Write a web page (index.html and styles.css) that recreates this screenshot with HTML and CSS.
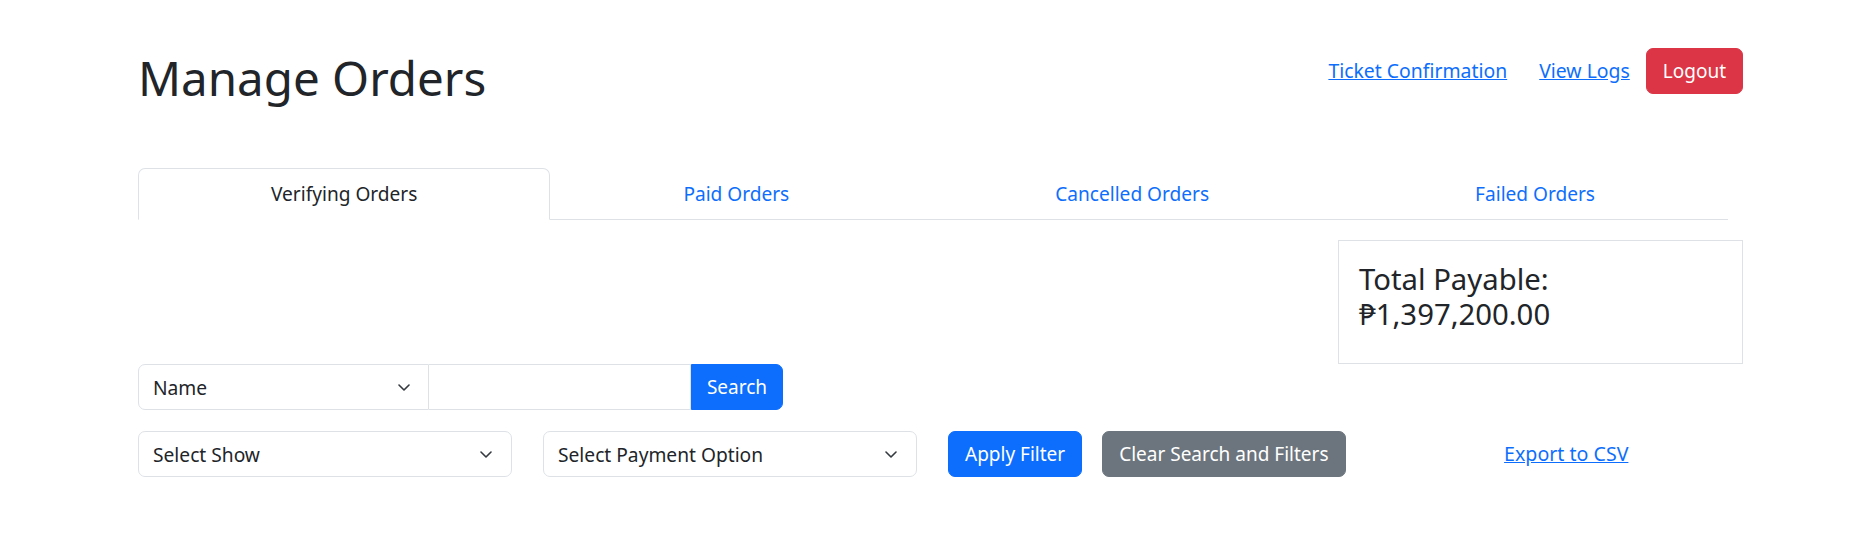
FILE: index.html
```html
<!DOCTYPE html>
<html lang="en">
<head>
<meta charset="utf-8">
<title>Manage Orders</title>
<link rel="stylesheet" href="styles.css">
</head>
<body>
<div class="page">
  <header class="top">
    <h1 class="title">Manage Orders</h1>
    <nav class="top-links">
      <a href="#" class="link link-ticket">Ticket Confirmation</a>
      <a href="#" class="link link-logs">View Logs</a>
      <button class="btn btn-red">Logout</button>
    </nav>
  </header>

  <ul class="tabs">
    <li class="tab active">Verifying Orders</li>
    <li class="tab">Paid Orders</li>
    <li class="tab">Cancelled Orders</li>
    <li class="tab">Failed Orders</li>
  </ul>

  <div class="summary-row">
    <div class="total-box">
      <h3 class="total">Total Payable:<br>₱1,397,200.00</h3>
    </div>
  </div>

  <div class="search-group">
    <div class="select select-name">
      <span>Name</span>
      <svg class="chev" viewBox="0 0 12 7" width="12" height="7"><path d="M1 1l5 5 5-5" fill="none" stroke="#343a40" stroke-width="1.6" stroke-linecap="round" stroke-linejoin="round"/></svg>
    </div>
    <div class="search-input"></div>
    <button class="btn btn-blue btn-search">Search</button>
  </div>

  <div class="filter-row">
    <div class="select select-filter">
      <span>Select Show</span>
      <svg class="chev" viewBox="0 0 12 7" width="12" height="7"><path d="M1 1l5 5 5-5" fill="none" stroke="#343a40" stroke-width="1.6" stroke-linecap="round" stroke-linejoin="round"/></svg>
    </div>
    <div class="select select-filter">
      <span>Select Payment Option</span>
      <svg class="chev" viewBox="0 0 12 7" width="12" height="7"><path d="M1 1l5 5 5-5" fill="none" stroke="#343a40" stroke-width="1.6" stroke-linecap="round" stroke-linejoin="round"/></svg>
    </div>
    <button class="btn btn-blue">Apply Filter</button>
    <button class="btn btn-gray">Clear Search and Filters</button>
    <div class="export-cell"><a href="#" class="link">Export to CSV</a></div>
  </div>
</div>
</body>
</html>
```
FILE: styles.css
```css
* { box-sizing: border-box; }
body {
  margin: 0;
  font-family: "Noto Sans", "Open Sans", sans-serif;
  font-size: 19.2px;
  color: #212529;
  background: #fff;
}
.page { width: 1605px; margin-left: 138px; padding-top: 48px; }

/* header */
.top { display: flex; justify-content: space-between; align-items: flex-start; }
.title { margin: 0; font-size: 47.5px; font-weight: 400; line-height: 59px; color: #212529; }
.top-links { display: flex; align-items: flex-start; }
.link { color: #0d6efd; text-decoration: underline; font-size: 19.4px; line-height: 46px; }
.link-ticket { margin-right: 32px; }
.link-logs { margin-right: 16px; }

.btn {
  border: 1px solid transparent;
  border-radius: 7px;
  color: #fff;
  font-family: inherit;
  font-size: 19px;
  padding: 0 16px;
  height: 46px;
  line-height: 44px;
  cursor: pointer;
}
.btn-red { background: #dc3545; border-color: #dc3545; }
.btn-blue { background: #0d6efd; border-color: #0d6efd; }
.btn-gray { background: #6c757d; border-color: #6c757d; }

/* tabs */
.tabs {
  list-style: none;
  margin: 61px 0 0;
  padding: 0;
  display: flex;
  width: 1590px;
  border-bottom: 1px solid #dee2e6;
}
.tab {
  flex: 1 1 auto;
  text-align: center;
  height: 52px;
  line-height: 50px;
  font-size: 19.1px;
  border: 1px solid transparent;
  margin-bottom: -1px;
  color: #0d6efd;
  border-radius: 7px 7px 0 0;
}
.tab.active { color: #212529; border-color: #dee2e6 #dee2e6 #fff; background: #fff; }

/* summary */
.summary-row { display: flex; justify-content: flex-end; margin-top: 20px; }
.total-box { width: 405px; height: 124px; border: 1px solid #dee2e6; padding: 21px 20px 0; }
.total { margin: 0; font-size: 29.3px; font-weight: 400; line-height: 35px; }

/* search */
.search-group { display: flex; height: 46px; }
.select {
  display: flex;
  align-items: center;
  justify-content: space-between;
  height: 46px;
  border: 1px solid #dee2e6;
  border-radius: 7px;
  padding: 0 18px 0 14px;
  background: #fff;
}
.select-name { width: 291px; border-radius: 7px 0 0 7px; }
.search-input { width: 262px; height: 46px; border: 1px solid #dee2e6; border-left: none; }
.btn-search { border-radius: 0 7px 7px 0; width: 92px; padding: 0; }

/* filters */
.filter-row { display: flex; align-items: center; margin-top: 21px; }
.select-filter { width: 374px; margin-right: 31px; padding-right: 19px; }
.filter-row .btn-blue { margin-right: 20px; }
.export-cell { flex: 1; margin-left: 44px; text-align: center; }
.export-cell .link { font-size: 19.6px; }
.chev { display: block; }
```
